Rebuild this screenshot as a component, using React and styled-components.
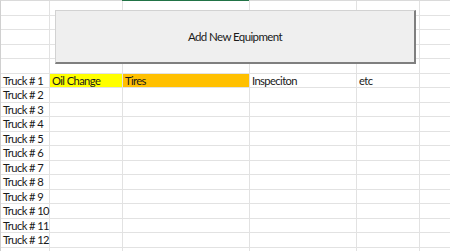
import React from "react";
import styled, { createGlobalStyle } from "styled-components";

const GlobalStyle = createGlobalStyle`
  html, body {
    margin: 0;
    padding: 0;
    background: #ffffff;
    overflow: hidden;
  }
  body {
    font-family: Lato, "Liberation Sans", sans-serif;
  }
`;

const Sheet = styled.div`
  position: relative;
  width: 450px;
  height: 251px;
  overflow: hidden;
`;

const Grid = styled.div`
  display: grid;
  grid-template-columns: 49px 73px 127px 107px 63px 40px;
  grid-auto-rows: 14.5px;
  border-left: 1px solid #d0d0d0;
  border-top: 1px solid #dadada;
`;

const Cell = styled.div`
  box-sizing: border-box;
  border-right: 1px solid #e2e2e2;
  border-bottom: 1px solid #e2e2e2;
  background: ${(props) => props.fill || "transparent"};
  font-size: 11.2px;
  letter-spacing: -0.6px;
  line-height: 14px;
  color: #1a1a1a;
  padding-left: 2px;
  white-space: nowrap;
`;

const SelectedEdge = styled.div`
  position: absolute;
  top: 0;
  left: 122px;
  width: 127px;
  height: 1px;
  background: #217346;
`;

const AddButton = styled.button`
  position: absolute;
  left: 55px;
  top: 10px;
  width: 361px;
  height: 54px;
  box-sizing: border-box;
  background: #efefef;
  border-top: 1px solid #d2d2d2;
  border-left: 1px solid #d2d2d2;
  border-right: 2px solid #7f7f7f;
  border-bottom: 2px solid #7f7f7f;
  font-family: Lato, "Liberation Sans", sans-serif;
  font-size: 11.5px;
  letter-spacing: -0.6px;
  color: #1a1a1a;
  padding: 0;
  cursor: pointer;
`;

const COLS = 6;
const ROWS = 18;

const firstRow = {
  0: { text: "Truck # 1" },
  1: { text: "Oil Change", fill: "#ffff00" },
  2: { text: "Tires", fill: "#ffc000" },
  3: { text: "Inspeciton" },
  4: { text: "etc" },
};

const App = () => {
  const cells = [];
  for (let r = 0; r < ROWS; r++) {
    for (let c = 0; c < COLS; c++) {
      let content = null;
      let fill;
      if (r === 5 && firstRow[c]) {
        content = firstRow[c].text;
        fill = firstRow[c].fill;
      } else if (r > 5 && r <= 16 && c === 0) {
        content = `Truck # ${r - 4}`;
      }
      cells.push(
        <Cell key={`${r}-${c}`} fill={fill}>
          {content}
        </Cell>
      );
    }
  }

  return (
    <>
      <GlobalStyle />
      <Sheet>
        <Grid>{cells}</Grid>
        <SelectedEdge />
        <AddButton>Add New Equipment</AddButton>
      </Sheet>
    </>
  );
};

export default App;
